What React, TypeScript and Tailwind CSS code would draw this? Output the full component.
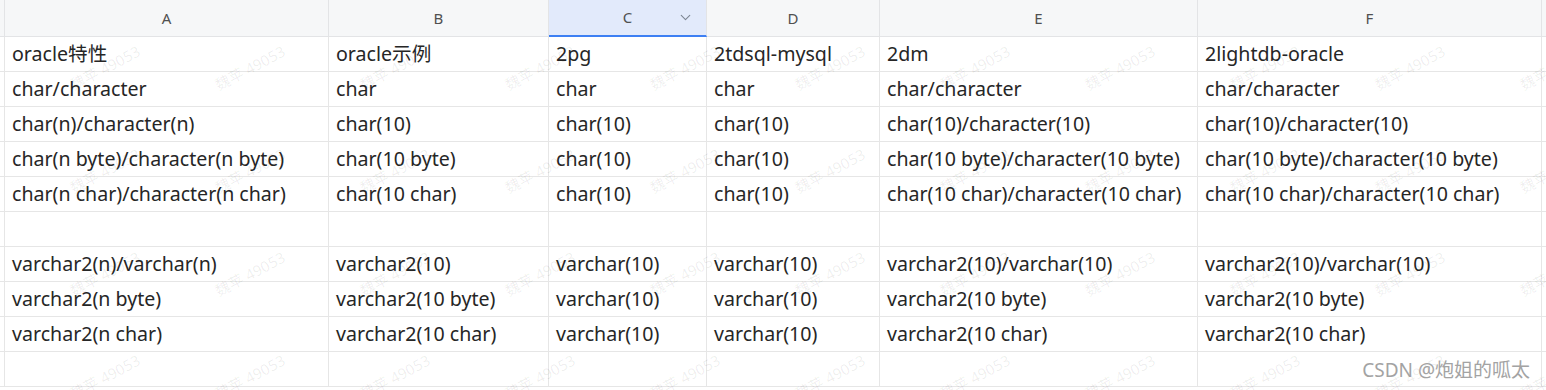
import { ChevronDown } from "lucide-react"

const cols = [
  { key: "A", w: "w-[324px]" },
  { key: "B", w: "w-[220px]" },
  { key: "C", w: "w-[158px]" },
  { key: "D", w: "w-[173px]" },
  { key: "E", w: "w-[318px]" },
  { key: "F", w: "w-[344px]" },
]

const rows: string[][] = [
  ["oracle特性", "oracle示例", "2pg", "2tdsql-mysql", "2dm", "2lightdb-oracle"],
  ["char/character", "char", "char", "char", "char/character", "char/character"],
  ["char(n)/character(n)", "char(10)", "char(10)", "char(10)", "char(10)/character(10)", "char(10)/character(10)"],
  ["char(n byte)/character(n byte)", "char(10 byte)", "char(10)", "char(10)", "char(10 byte)/character(10 byte)", "char(10 byte)/character(10 byte)"],
  ["char(n char)/character(n char)", "char(10 char)", "char(10)", "char(10)", "char(10 char)/character(10 char)", "char(10 char)/character(10 char)"],
  ["", "", "", "", "", ""],
  ["varchar2(n)/varchar(n)", "varchar2(10)", "varchar(10)", "varchar(10)", "varchar2(10)/varchar(10)", "varchar2(10)/varchar(10)"],
  ["varchar2(n byte)", "varchar2(10 byte)", "varchar(10)", "varchar(10)", "varchar2(10 byte)", "varchar2(10 byte)"],
  ["varchar2(n char)", "varchar2(10 char)", "varchar(10)", "varchar(10)", "varchar2(10 char)", "varchar2(10 char)"],
  ["", "", "", "", "", ""],
]

// faint tenant watermark tiled over the sheet
const marks: { x: number; y: number }[] = []
for (let j = -1; j < 5; j++) {
  for (let k = -1; k < 11; k++) {
    marks.push({ x: 105 + 145 * k, y: 68 + 103 * j })
  }
}

export default function App() {
  return (
    <div className="relative h-[390px] w-[1546px] overflow-hidden bg-white font-['Noto_Sans','Noto_Sans_CJK_SC',sans-serif] text-[#262626]">
      {/* Column header */}
      <div className="flex h-[37px] border-b border-[#e3e4e6] bg-[#f6f7f8] text-[15px] text-[#505050]">
        <div className="w-[5px] shrink-0 border-r border-[#e3e4e6]" />
        {cols.map((c) =>
          c.key === "C" ? (
            <div
              key={c.key}
              className={`relative flex ${c.w} shrink-0 items-center justify-center border-r border-[#e3e4e6] border-b-2 border-b-[#3d7ff3] bg-[#e2eafb] -mb-px`}
            >
              {c.key}
              <ChevronDown className="absolute right-[12px] top-[9px] h-[17px] w-[17px] text-[#7d8694]" strokeWidth={1.6} />
            </div>
          ) : (
            <div key={c.key} className={`flex ${c.w} shrink-0 items-center justify-center border-r border-[#e3e4e6]`}>
              {c.key}
            </div>
          )
        )}
      </div>

      {/* Rows */}
      {rows.map((r, i) => (
        <div key={i} className="flex h-[35px] border-b border-[#e6e6e6] text-[19.6px] leading-none">
          <div className="w-[5px] shrink-0 border-r border-[#e6e6e6]" />
          {r.map((v, ci) => (
            <div
              key={ci}
              className={`flex ${cols[ci].w} shrink-0 items-center whitespace-nowrap border-r border-[#e6e6e6] pl-[7px]`}
            >
              {v}
            </div>
          ))}
        </div>
      ))}

      {/* Watermark layer */}
      <div className="pointer-events-none absolute inset-0">
        {marks.map((m, i) => (
          <span
            key={i}
            className="absolute -translate-x-1/2 -translate-y-1/2 -rotate-[28deg] whitespace-nowrap text-[15px] text-black/[0.07]"
            style={{ left: m.x, top: m.y }}
          >
            魏苹 49053
          </span>
        ))}
      </div>

      <div className="pointer-events-none absolute bottom-[6px] right-[16px] text-[19px] text-[#a3a3a3]">
        CSDN @炮姐的呱太
      </div>
    </div>
  )
}
